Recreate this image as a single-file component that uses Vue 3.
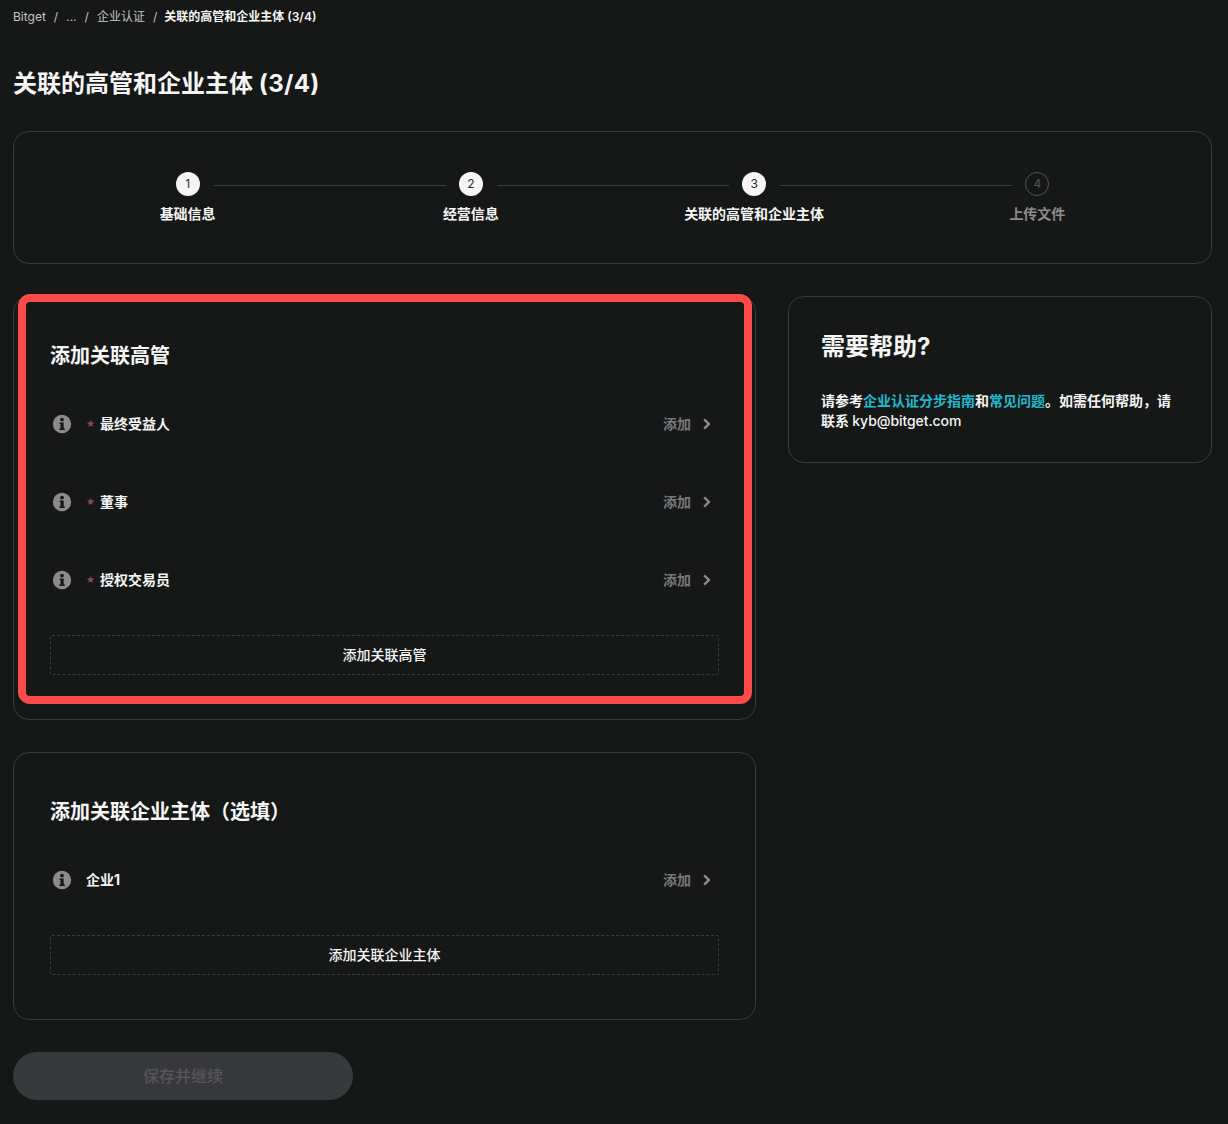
<script setup>
const crumbs = ['Bitget', '...', '企业认证']
const steps = [
  { n: 1, label: '基础信息', done: true },
  { n: 2, label: '经营信息', done: true },
  { n: 3, label: '关联的高管和企业主体', done: true },
  { n: 4, label: '上传文件', done: false },
]
const officers = ['最终受益人', '董事', '授权交易员']
</script>

<template>
  <div class="page">
    <nav class="crumbs">
      <template v-for="c in crumbs" :key="c">
        <span class="crumb">{{ c }}</span>
        <span class="sep">/</span>
      </template>
      <span class="crumb current">关联的高管和企业主体 (3/4)</span>
    </nav>

    <h1 class="title">关联的高管和企业主体 <span class="count">(3/4)</span></h1>

    <section class="box stepper">
      <div v-for="(s, i) in steps" :key="s.n" class="step" :class="{ off: !s.done }">
        <div class="dot">{{ s.n }}</div>
        <div v-if="i < steps.length - 1" class="line"></div>
        <div class="step-label">{{ s.label }}</div>
      </div>
    </section>

    <div class="main">
      <div class="left">
        <section class="box card">
          <div class="highlight"></div>
          <h2 class="card-title">添加关联高管</h2>
          <div v-for="o in officers" :key="o" class="row">
            <svg class="info" viewBox="0 0 20 20" width="20" height="20">
              <circle cx="10" cy="10" r="9.200" fill="#8b8b8f" />
              <circle cx="10" cy="5.600" r="1.900" fill="#161817" />
              <path d="M7.600 8.400h4.100v6h1.100v1.600H7.300v-1.600h1.200V10H7.600z" fill="#161817" />
            </svg>
            <span class="star">★</span>
            <span class="row-label">{{ o }}</span>
            <span class="add">添加</span>
            <svg class="chev" viewBox="0 0 10 12" width="10" height="12">
              <path d="M3.200 1.300 7.900 6l-4.700 4.700" fill="none" stroke="#8b8b8f" stroke-width="2.400" />
            </svg>
          </div>
          <button class="dashed">添加关联高管</button>
        </section>

        <section class="box card">
          <h2 class="card-title">添加关联企业主体（选填）</h2>
          <div class="row">
            <svg class="info" viewBox="0 0 20 20" width="20" height="20">
              <circle cx="10" cy="10" r="9.200" fill="#8b8b8f" />
              <circle cx="10" cy="5.600" r="1.900" fill="#161817" />
              <path d="M7.600 8.400h4.100v6h1.100v1.600H7.300v-1.600h1.200V10H7.600z" fill="#161817" />
            </svg>
            <span class="row-label plain">企业1</span>
            <span class="add">添加</span>
            <svg class="chev" viewBox="0 0 10 12" width="10" height="12">
              <path d="M3.200 1.300 7.900 6l-4.700 4.700" fill="none" stroke="#8b8b8f" stroke-width="2.400" />
            </svg>
          </div>
          <button class="dashed">添加关联企业主体</button>
        </section>

        <button class="save" disabled>保存并继续</button>
      </div>

      <aside class="box help">
        <h2 class="help-title">需要帮助?</h2>
        <p class="help-text">请参考<a class="link">企业认证分步指南</a>和<a class="link">常见问题</a>。如需任何帮助，请联系 <span class="mail">kyb@bitget.com</span></p>
      </aside>
    </div>
  </div>
</template>

<style>
html, body { background: #161817; }
</style>

<style scoped>
.page {
  box-sizing: border-box;
  width: 1228px;
  height: 1124px;
  overflow: hidden;
  padding: 8px 16px 0 13px;
  background: #161817;
  color: #f5f5f5;
  font-family: Inter, "Noto Sans CJK SC", sans-serif;
}
.crumbs {
  display: flex;
  align-items: center;
  height: 18px;
  font-size: 12px;
  line-height: 18px;
  color: #c4c4c6;
}
.sep { margin: 0 8px; }
.current { margin-left: -1px; color: #f5f5f5; font-weight: 600; }
.title {
  margin: 42px 0 31px;
  font-size: 24px;
  line-height: 32px;
  font-weight: 700;
  color: #f5f5f5;
}
.count { letter-spacing: 0.4px; }
.box {
  box-sizing: border-box;
  border: 1px solid #3a3b3d;
  border-radius: 16px;
}
.stepper {
  display: grid;
  grid-template-columns: repeat(4, 1fr);
  height: 133px;
  padding: 40px 32px 0;
}
.step {
  position: relative;
  display: flex;
  flex-direction: column;
  align-items: center;
  gap: 8px;
}
.dot {
  box-sizing: border-box;
  width: 24px;
  height: 24px;
  border-radius: 50%;
  background: #f5f5f5;
  color: #2b2c2e;
  font-size: 12px;
  line-height: 24px;
  text-align: center;
}
.off .dot {
  background: transparent;
  border: 1px solid #55565a;
  color: #55565a;
  line-height: 22px;
}
.line {
  position: absolute;
  top: 13px;
  left: calc(50% + 26px);
  width: 232px;
  height: 1px;
  background: #3a3b3d;
}
.step-label {
  font-size: 14px;
  line-height: 20px;
  font-weight: 600;
  color: #f5f5f5;
}
.off .step-label { color: #8b8b8f; }
.main {
  display: grid;
  grid-template-columns: 1fr 424px;
  gap: 32px;
  align-items: start;
  margin-top: 32px;
}
.left {
  display: flex;
  flex-direction: column;
  gap: 32px;
  align-items: flex-start;
}
.card {
  position: relative;
  width: 100%;
  padding: 36px 36px 44px;
}
.highlight {
  position: absolute;
  box-sizing: border-box;
  left: 4px;
  top: -3px;
  width: 734px;
  height: 410px;
  border: 8px solid #fb4b4a;
  border-radius: 12px;
  pointer-events: none;
}
.card-title {
  margin: 0 0 8px;
  padding-top: 2px;
  font-size: 20px;
  line-height: 42px;
  font-weight: 700;
  color: #f5f5f5;
}
.row {
  display: flex;
  align-items: center;
  height: 78px;
  padding: 0 8px 0 2px;
}
.info { flex: none; }
.star {
  width: 14px;
  margin-left: 14px;
  color: #8f4a5a;
  font-family: "DejaVu Sans", sans-serif;
  font-size: 10px;
  line-height: 14px;
}
.row-label {
  flex: 1;
  font-size: 14px;
  line-height: 20px;
  font-weight: 700;
  color: #f5f5f5;
}
.row-label.plain { margin-left: 14px; }
.add {
  font-size: 14px;
  line-height: 20px;
  font-weight: 700;
  color: #77777b;
}
.chev { flex: none; margin-left: 10px; }
.dashed {
  display: block;
  box-sizing: border-box;
  width: 100%;
  height: 40px;
  margin-top: 16px;
  padding: 0;
  background: transparent;
  border: 1px dashed #3a3b3d;
  border-radius: 2px;
  color: #f5f5f5;
  font: 500 14px/20px Inter, "Noto Sans CJK SC", sans-serif;
}
.save {
  width: 340px;
  height: 48px;
  padding: 0;
  border: 0;
  border-radius: 24px;
  background: #38393d;
  color: #55565a;
  font: 500 16px/24px Inter, "Noto Sans CJK SC", sans-serif;
}
.help {
  padding: 32px 32px 31px;
}
.help-title {
  margin: 0 0 28px;
  padding-top: 2px;
  font-size: 24px;
  line-height: 32px;
  font-weight: 700;
  color: #f5f5f5;
}
.help-text {
  margin: 0;
  font-size: 14px;
  line-height: 20px;
  font-weight: 700;
  color: #f5f5f5;
}
.mail { font-weight: 500; letter-spacing: -0.08px; }
.link { color: #1fb9cd; }
</style>
